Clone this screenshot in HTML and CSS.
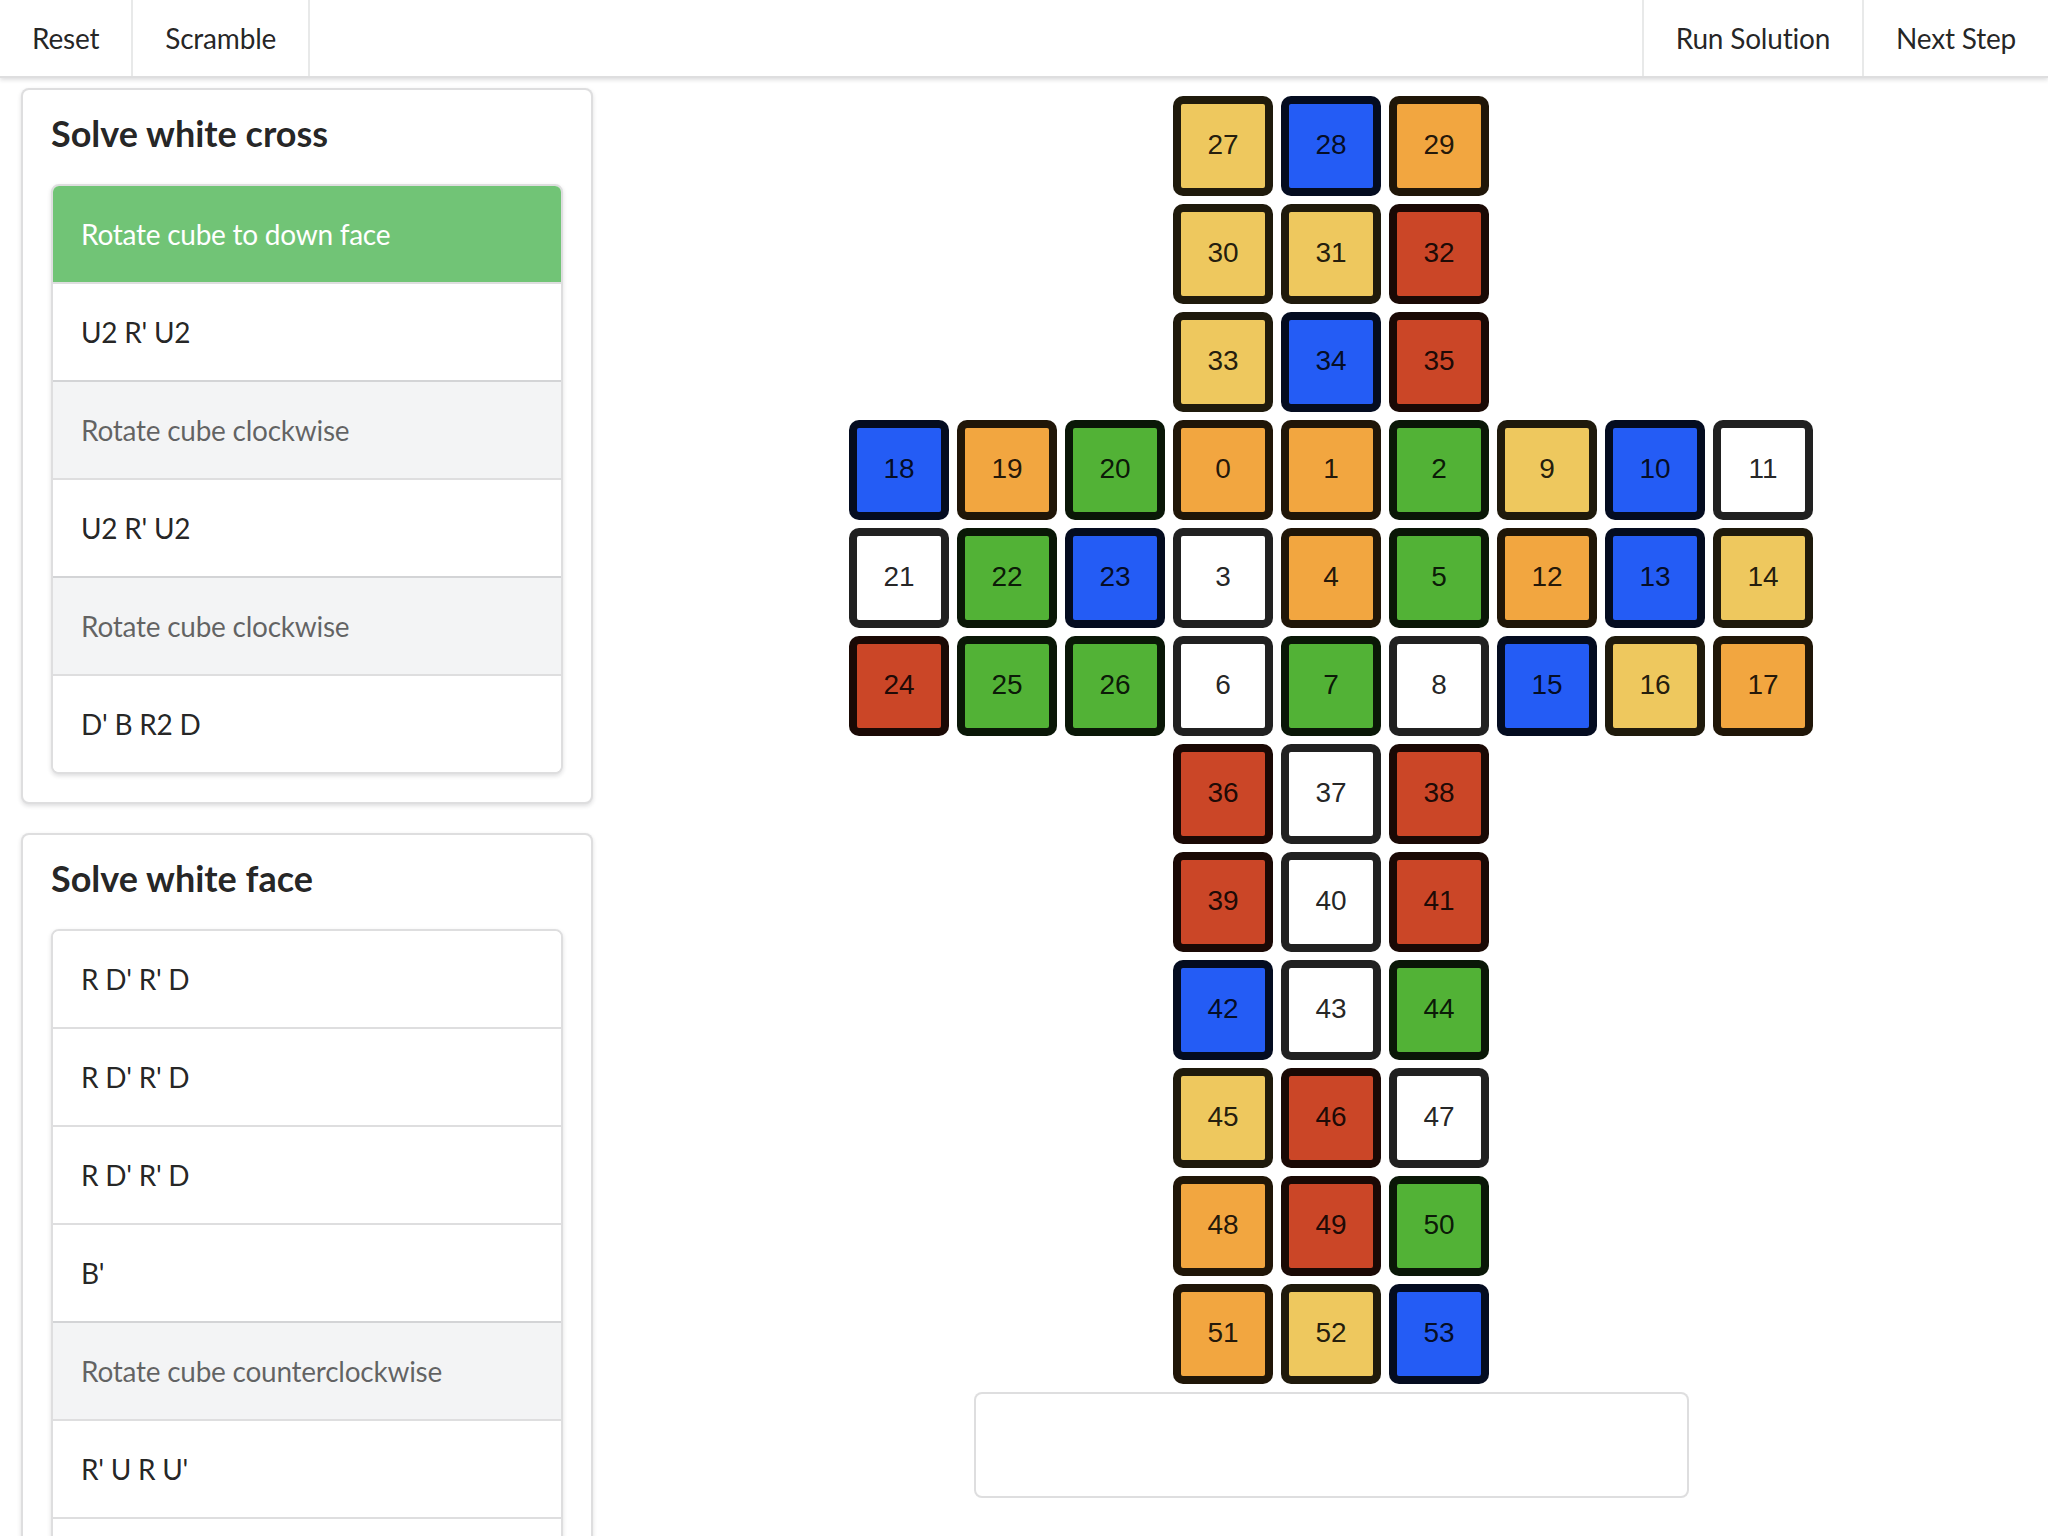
FILE: index.html
```html
<!DOCTYPE html>
<html lang="en">
<head>
<meta charset="utf-8">
<title>Cube Solver</title>
<link rel="stylesheet" href="styles.css">
</head>
<body>
<nav class="menu">
  <div class="item">Reset</div>
  <div class="item">Scramble</div>
  <div class="menu-right">
    <div class="item">Run Solution</div>
    <div class="item">Next Step</div>
  </div>
</nav>
<main class="page">
  <aside class="steps">
    <section class="card">
      <h3 class="card-title">Solve white cross</h3>
      <div class="moves">
        <div class="move active">Rotate cube to down face</div>
        <div class="move">U2 R' U2</div>
        <div class="move rotate">Rotate cube clockwise</div>
        <div class="move">U2 R' U2</div>
        <div class="move rotate">Rotate cube clockwise</div>
        <div class="move">D' B R2 D</div>
      </div>
    </section>
    <section class="card">
      <h3 class="card-title">Solve white face</h3>
      <div class="moves">
        <div class="move">R D' R' D</div>
        <div class="move">R D' R' D</div>
        <div class="move">R D' R' D</div>
        <div class="move">B'</div>
        <div class="move rotate">Rotate cube counterclockwise</div>
        <div class="move">R' U R U'</div>
        <div class="move">&nbsp;</div>
      </div>
    </section>
  </aside>
  <section class="board">
    <div class="cube">
      <div class="tile y c4">27</div><div class="tile b">28</div><div class="tile o">29</div>
      <div class="tile y c4">30</div><div class="tile y">31</div><div class="tile r">32</div>
      <div class="tile y c4">33</div><div class="tile b">34</div><div class="tile r">35</div>
      <div class="tile b c1">18</div><div class="tile o">19</div><div class="tile g">20</div><div class="tile o">0</div><div class="tile o">1</div><div class="tile g">2</div><div class="tile y">9</div><div class="tile b">10</div><div class="tile w">11</div>
      <div class="tile w">21</div><div class="tile g">22</div><div class="tile b">23</div><div class="tile w">3</div><div class="tile o">4</div><div class="tile g">5</div><div class="tile o">12</div><div class="tile b">13</div><div class="tile y">14</div>
      <div class="tile r">24</div><div class="tile g">25</div><div class="tile g">26</div><div class="tile w">6</div><div class="tile g">7</div><div class="tile w">8</div><div class="tile b">15</div><div class="tile y">16</div><div class="tile o">17</div>
      <div class="tile r c4">36</div><div class="tile w">37</div><div class="tile r">38</div>
      <div class="tile r c4">39</div><div class="tile w">40</div><div class="tile r">41</div>
      <div class="tile b c4">42</div><div class="tile w">43</div><div class="tile g">44</div>
      <div class="tile y c4">45</div><div class="tile r">46</div><div class="tile w">47</div>
      <div class="tile o c4">48</div><div class="tile r">49</div><div class="tile g">50</div>
      <div class="tile o c4">51</div><div class="tile y">52</div><div class="tile b">53</div>
    </div>
    <div class="output"></div>
  </section>
</main>
</body>
</html>
```

FILE: styles.css
```css
html, body {
  margin: 0;
  padding: 0;
  background: #fff;
}

body {
  font-family: Lato, "Helvetica Neue", Arial, sans-serif;
  font-size: 28px;
  color: rgba(0, 0, 0, 0.87);
  height: 100vh;
  overflow: hidden;
}

/* top menu */
.menu {
  display: flex;
  height: 76px;
  border-bottom: 2px solid rgba(34, 36, 38, 0.15);
  box-shadow: 0 2px 4px 0 rgba(34, 36, 38, 0.15);
  background: #fff;
  position: relative;
  z-index: 2;
}

.item {
  display: flex;
  align-items: center;
  padding: 0 32px;
  line-height: 1;
  letter-spacing: -0.2px;
  border-right: 2px solid rgba(34, 36, 38, 0.1);
  white-space: nowrap;
}

.menu-right {
  margin-left: auto;
  display: flex;
}

.menu-right .item {
  border-right: none;
  border-left: 2px solid rgba(34, 36, 38, 0.1);
}

/* page */
.page {
  display: flex;
  height: calc(100vh - 78px);
  overflow: hidden;
}

.steps {
  flex: none;
  width: 614px;
  box-sizing: border-box;
  padding: 10px 21px 0;
  overflow: hidden;
}

.card {
  border: 2px solid rgba(34, 36, 38, 0.15);
  border-radius: 8px;
  box-shadow: 0 2px 4px 0 rgba(34, 36, 38, 0.15);
  padding: 28px;
  margin-bottom: 29px;
  background: #fff;
}

.card-title {
  margin: -8px 0 28px;
  font-size: 36px;
  line-height: 46px;
  font-weight: 700;
  color: rgba(0, 0, 0, 0.87);
}

.moves {
  border: 2px solid rgba(34, 36, 38, 0.15);
  border-radius: 8px;
  box-shadow: 0 2px 4px 0 rgba(34, 36, 38, 0.15);
  overflow: hidden;
}

.move {
  padding: 28px 28px;
  line-height: 40px;
  font-size: 28px;
  letter-spacing: -0.25px;
  color: rgba(0, 0, 0, 0.87);
  background: #fff;
  border-top: 2px solid rgba(34, 36, 38, 0.15);
}

.move:first-child {
  border-top: none;
}

.move.rotate {
  background: #f3f4f5;
  color: rgba(0, 0, 0, 0.6);
}

.move.active {
  background: #71c476;
  color: #fff;
}

/* cube board */
.board {
  flex: 1;
  display: flex;
  flex-direction: column;
  align-items: center;
  padding-top: 18px;
}

.cube {
  display: grid;
  grid-template-columns: repeat(9, 100px);
  grid-auto-rows: 100px;
  gap: 8px;
}

.tile {
  box-sizing: border-box;
  border: 8px solid rgba(0, 0, 0, 0.87);
  border-radius: 10px;
  display: flex;
  align-items: center;
  justify-content: center;
  padding-bottom: 2px;
  font-family: "Liberation Sans", Arial, sans-serif;
  font-size: 28px;
  color: rgba(0, 0, 0, 0.87);
}

.c1 { grid-column-start: 1; }
.c4 { grid-column-start: 4; }

.y { background-color: #eec85e; }
.b { background-color: #245cf5; }
.o { background-color: #f2a640; }
.r { background-color: #cb4627; }
.g { background-color: #52b236; }
.w { background-color: #ffffff; }

.output {
  width: 715px;
  height: 106px;
  box-sizing: border-box;
  margin-top: 8px;
  border: 2px solid rgba(34, 36, 38, 0.15);
  border-radius: 8px;
  background: #fff;
}
```
